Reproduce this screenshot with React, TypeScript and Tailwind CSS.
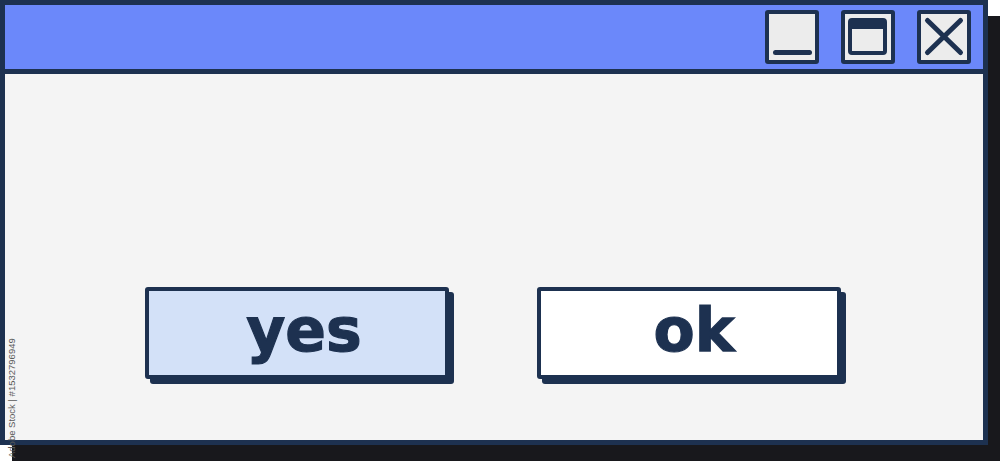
const navy = '#1d3150';

const TitleButton = ({ children }: { children: React.ReactNode }) => (
  <div className="w-[54px] h-[54px] rounded-[3px] border-4 border-[#1d3150] bg-[#ececec] flex items-center justify-center">
    {children}
  </div>
);

const App = () => {
  return (
    <div className="relative w-[1000px] h-[462px] bg-white overflow-hidden" style={{ fontFamily: '"DejaVu Sans", Verdana, sans-serif' }}>
      {/* Window */}
      <div className="w-[988px] h-[445px] border-[5px] border-[#1d3150] bg-[#f4f4f4] shadow-[12px_16px_0_#18181c] flex flex-col">
        {/* Title bar */}
        <div className="h-[69px] shrink-0 bg-[#6b88fa] border-b-[5px] border-[#1d3150] flex items-center justify-end gap-[22px] pr-[12px]">
          <TitleButton>
            <svg width="46" height="46" viewBox="0 0 46 46">
              <line x1="6.5" y1="38.5" x2="40.5" y2="38.5" stroke={navy} strokeWidth="5" strokeLinecap="round" />
            </svg>
          </TitleButton>
          <TitleButton>
            <svg width="46" height="46" viewBox="0 0 46 46">
              <rect x="5" y="6" width="35" height="33" rx="2" fill="none" stroke={navy} strokeWidth="4" />
              <rect x="4" y="5" width="37" height="10" rx="1" fill={navy} />
            </svg>
          </TitleButton>
          <TitleButton>
            <svg width="46" height="46" viewBox="0 0 46 46">
              <line x1="6.5" y1="6.5" x2="39.5" y2="38.5" stroke={navy} strokeWidth="5" strokeLinecap="round" />
              <line x1="39.5" y1="6.5" x2="6.5" y2="38.5" stroke={navy} strokeWidth="5" strokeLinecap="round" />
            </svg>
          </TitleButton>
        </div>

        {/* Body */}
        <div className="flex-1 flex items-start gap-[88px] pl-[140px] pt-[213px]">
          <button className="w-[304px] h-[92px] rounded-[3px] border-4 border-[#1d3150] bg-[#d3e1f8] shadow-[5px_5px_0_#1d3150] flex items-center justify-center pl-[14px] pb-[6px] text-[60px] font-bold leading-none text-[#1d3150] [-webkit-text-stroke:1.2px_#1d3150]">
            yes
          </button>
          <button className="w-[304px] h-[92px] rounded-[3px] border-4 border-[#1d3150] bg-white shadow-[5px_5px_0_#1d3150] flex items-center justify-center pl-[10px] pb-[6px] text-[60px] font-bold leading-none text-[#1d3150] [-webkit-text-stroke:1.2px_#1d3150]">
            ok
          </button>
        </div>
      </div>

      {/* Watermark */}
      <div className="absolute left-[7px] top-[458px] origin-top-left -rotate-90 text-[9.5px] leading-none text-[#5a5a5a] whitespace-nowrap" style={{ fontFamily: '"Liberation Sans", Arial, sans-serif' }}>
        Adobe Stock | #1532796949
      </div>
    </div>
  );
};

export default App;
